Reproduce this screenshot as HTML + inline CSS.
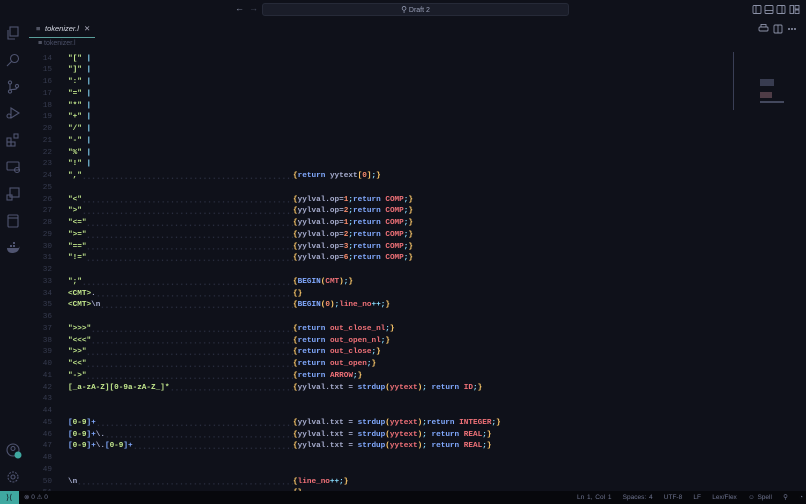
<!DOCTYPE html>
<html><head><meta charset="utf-8"><style>
*{margin:0;padding:0;box-sizing:border-box}
html,body{width:806px;height:504px;overflow:hidden}
body{background:#0f111a;position:relative;font-family:"Liberation Sans",sans-serif}
.title{position:absolute;left:0;top:0;width:806px;height:19px;background:#0f111a}
.search{position:absolute;left:262px;top:3px;width:307px;height:13px;background:#1a1d29;border:1px solid #262a38;border-radius:3px;color:#9aa0b8;font-size:7px;text-align:center;line-height:11px}
.act{position:absolute;left:0;top:19px;width:27px;height:472px;background:#0f111a}
.act svg{position:absolute;left:6px}
.tab{position:absolute;left:29px;top:20px;width:66px;height:18px;border-bottom:1.5px solid #5a9e9a;color:#d8dbe6;font-size:7.5px;font-style:italic;line-height:18px;padding-left:16px}
.bc{position:absolute;left:38px;top:40px;color:#4b5068;font-size:7px}
.code{position:absolute;left:0;top:53.5px;font-family:"Liberation Mono",monospace;font-size:7.7px;font-weight:bold}
.l{height:11.75px;line-height:11.75px;white-space:pre;display:flex;position:relative}
.n{width:52px;text-align:right;color:#363b4f;font-weight:normal}
.p{position:absolute;left:68px;display:flex;width:225px}
.f{flex:1;background-image:radial-gradient(circle,#33384d 0.5px,transparent 0.8px);background-size:4.65px 11.75px;background-position:0 1px}
.a{position:absolute;left:293px}
.s{color:#c3e88d}.c{color:#89ddff}.y{color:#ffcb6b}.k{color:#82aaff}.r{color:#f07178}.o{color:#f78c6c}.v{color:#a6accd}.b{color:#82aaff}
.status{position:absolute;left:0;top:491px;width:806px;height:13px;background:#07080c;color:#6f7590;font-size:6.5px;line-height:13px}
.rem{position:absolute;left:0;top:0;width:19px;height:13px;background:#3fa8a0}
</style></head><body>
<div class="title">
<span style="position:absolute;left:235px;top:3px;color:#8c92a8;font-size:9px">←</span>
<span style="position:absolute;left:249px;top:3px;color:#474c60;font-size:9px">→</span>
<div class="search"><span style="font-size:8px">⚲</span> Draft 2</div>
<svg style="position:absolute;left:752px;top:5px" width="48" height="9" fill="none" stroke="#8c92a8" stroke-width="0.9">
<rect x="1" y="0.5" width="8" height="8" rx="1"/><line x1="4" y1="0.5" x2="4" y2="8.5"/>
<rect x="13" y="0.5" width="8" height="8" rx="1"/><line x1="13" y1="5.5" x2="21" y2="5.5"/>
<rect x="25" y="0.5" width="8" height="8" rx="1"/><line x1="30" y1="0.5" x2="30" y2="8.5"/>
<rect x="38" y="0.5" width="3.5" height="8"/><rect x="43" y="0.5" width="4" height="3.5"/><rect x="43" y="5" width="4" height="3.5"/>
</svg>
</div>
<div class="act">
<svg style="top:7px" width="14" height="14" fill="none" stroke="#4f5470" stroke-width="1.1"><rect x="4" y="1" width="8" height="9"/><path d="M2 4v9h7"/></svg>
<svg style="top:34px" width="14" height="14" fill="none" stroke="#4f5470" stroke-width="1.1"><circle cx="8.5" cy="5.5" r="4"/><path d="M5.5 8.5L1 13"/></svg>
<svg style="top:61px" width="14" height="14" fill="none" stroke="#4f5470" stroke-width="1.1"><circle cx="4" cy="2.5" r="1.6"/><circle cx="4" cy="11.5" r="1.6"/><circle cx="11" cy="6" r="1.6"/><path d="M4 4v6M11 7.6c0 3-7 1-7 2.5"/></svg>
<svg style="top:87px" width="14" height="14" fill="none" stroke="#4f5470" stroke-width="1.1"><path d="M5 2l8 5-8 5z"/><circle cx="3" cy="10" r="2"/></svg>
<svg style="top:114px" width="14" height="14" fill="none" stroke="#4f5470" stroke-width="1.1"><rect x="1" y="5" width="4" height="4"/><rect x="1" y="9" width="4" height="4"/><rect x="5" y="9" width="4" height="4"/><rect x="8" y="1" width="4" height="4"/></svg>
<svg style="top:141px" width="14" height="14" fill="none" stroke="#4f5470" stroke-width="1.1"><rect x="1" y="2" width="12" height="8" rx="1"/><circle cx="11" cy="10" r="2.5"/></svg>
<svg style="top:168px" width="14" height="14" fill="none" stroke="#4f5470" stroke-width="1.1"><rect x="4" y="1" width="9" height="9"/><rect x="1" y="8" width="5" height="5"/></svg>
<svg style="top:195px" width="14" height="14" fill="none" stroke="#4f5470" stroke-width="1.1"><rect x="2" y="1" width="10" height="12" rx="1"/><path d="M2 4h10"/></svg>
<svg style="top:222px" width="14" height="14" fill="#4f5470"><path d="M1 7h11c1 0 1.5-1 2-2l-1 3c-1 3-4 4-7 4s-5-2-5-5z"/><rect x="4" y="4" width="2" height="2"/><rect x="7" y="4" width="2" height="2"/><rect x="7" y="1" width="2" height="2"/></svg>
<svg style="top:424px" width="16" height="16" fill="none" stroke="#4f5470" stroke-width="1.1"><circle cx="7" cy="7" r="6"/><circle cx="7" cy="5.5" r="2"/><circle cx="12" cy="12" r="3.5" fill="#3fa8a0" stroke="none"/></svg>
<svg style="top:451px" width="14" height="14" fill="none" stroke="#4f5470" stroke-width="1.1"><circle cx="7" cy="7" r="2"/><circle cx="7" cy="7" r="5" stroke-dasharray="2 1.2"/></svg>
</div>
<div class="tab"><span style="position:absolute;left:7px;font-style:normal;color:#8c92a8">≡</span>tokenizer.l<span style="position:absolute;left:55px;font-style:normal;color:#aab">✕</span></div>
<div class="bc"><span style="color:#8c92a8">≡</span> tokenizer.l</div>
<svg style="position:absolute;left:758px;top:24px" width="40" height="10" fill="none" stroke="#8c92a8" stroke-width="0.9"><rect x="1" y="3" width="9" height="4" rx="1"/><rect x="3" y="0.5" width="5" height="2.5"/><rect x="16" y="1" width="8" height="8" rx="1"/><line x1="20" y1="1" x2="20" y2="9"/><circle cx="31" cy="5" r="0.6" fill="#8c92a8"/><circle cx="34" cy="5" r="0.6" fill="#8c92a8"/><circle cx="37" cy="5" r="0.6" fill="#8c92a8"/></svg>
<div style="position:absolute;left:760px;top:79px;width:14px;height:7px;background:#4a4f68;opacity:.7"></div>
<div style="position:absolute;left:760px;top:92px;width:12px;height:6px;background:#6a4f5a;opacity:.7"></div>
<div style="position:absolute;left:760px;top:101px;width:24px;height:2px;background:#5a5f7a;opacity:.7"></div>
<div style="position:absolute;left:733px;top:52px;width:1px;height:58px;background:#3a3f56"></div>
<div class="code">
<div class="l"><span class="n">14</span><span class="p"><span class="s">"["</span><span class="c"> |</span></span></div>
<div class="l"><span class="n">15</span><span class="p"><span class="s">"]"</span><span class="c"> |</span></span></div>
<div class="l"><span class="n">16</span><span class="p"><span class="s">":"</span><span class="c"> |</span></span></div>
<div class="l"><span class="n">17</span><span class="p"><span class="s">"="</span><span class="c"> |</span></span></div>
<div class="l"><span class="n">18</span><span class="p"><span class="s">"*"</span><span class="c"> |</span></span></div>
<div class="l"><span class="n">19</span><span class="p"><span class="s">"+"</span><span class="c"> |</span></span></div>
<div class="l"><span class="n">20</span><span class="p"><span class="s">"/"</span><span class="c"> |</span></span></div>
<div class="l"><span class="n">21</span><span class="p"><span class="s">"-"</span><span class="c"> |</span></span></div>
<div class="l"><span class="n">22</span><span class="p"><span class="s">"%"</span><span class="c"> |</span></span></div>
<div class="l"><span class="n">23</span><span class="p"><span class="s">"!"</span><span class="c"> |</span></span></div>
<div class="l"><span class="n">24</span><span class="p"><span class="s">","</span><span class="f"></span></span><span class="a"><span class="y">{</span><span class="k">return</span> <span class="v">yytext</span><span class="y">[</span><span class="o">0</span><span class="y">]</span><span class="c">;</span><span class="y">}</span></span></div>
<div class="l"><span class="n">25</span></div>
<div class="l"><span class="n">26</span><span class="p"><span class="s">"&lt;"</span><span class="f"></span></span><span class="a"><span class="y">{</span><span class="v">yylval.op=</span><span class="o">1</span><span class="c">;</span><span class="k">return</span> <span class="r">COMP</span><span class="c">;</span><span class="y">}</span></span></div>
<div class="l"><span class="n">27</span><span class="p"><span class="s">"&gt;"</span><span class="f"></span></span><span class="a"><span class="y">{</span><span class="v">yylval.op=</span><span class="o">2</span><span class="c">;</span><span class="k">return</span> <span class="r">COMP</span><span class="c">;</span><span class="y">}</span></span></div>
<div class="l"><span class="n">28</span><span class="p"><span class="s">"&lt;="</span><span class="f"></span></span><span class="a"><span class="y">{</span><span class="v">yylval.op=</span><span class="o">1</span><span class="c">;</span><span class="k">return</span> <span class="r">COMP</span><span class="c">;</span><span class="y">}</span></span></div>
<div class="l"><span class="n">29</span><span class="p"><span class="s">"&gt;="</span><span class="f"></span></span><span class="a"><span class="y">{</span><span class="v">yylval.op=</span><span class="o">2</span><span class="c">;</span><span class="k">return</span> <span class="r">COMP</span><span class="c">;</span><span class="y">}</span></span></div>
<div class="l"><span class="n">30</span><span class="p"><span class="s">"=="</span><span class="f"></span></span><span class="a"><span class="y">{</span><span class="v">yylval.op=</span><span class="o">3</span><span class="c">;</span><span class="k">return</span> <span class="r">COMP</span><span class="c">;</span><span class="y">}</span></span></div>
<div class="l"><span class="n">31</span><span class="p"><span class="s">"!="</span><span class="f"></span></span><span class="a"><span class="y">{</span><span class="v">yylval.op=</span><span class="o">6</span><span class="c">;</span><span class="k">return</span> <span class="r">COMP</span><span class="c">;</span><span class="y">}</span></span></div>
<div class="l"><span class="n">32</span></div>
<div class="l"><span class="n">33</span><span class="p"><span class="s">";"</span><span class="f"></span></span><span class="a"><span class="y">{</span><span class="b">BEGIN</span><span class="y">(</span><span class="r">CMT</span><span class="y">)</span><span class="c">;</span><span class="y">}</span></span></div>
<div class="l"><span class="n">34</span><span class="p"><span class="s">&lt;CMT&gt;</span><span class="v">.</span><span class="f"></span></span><span class="a"><span class="y">{}</span></span></div>
<div class="l"><span class="n">35</span><span class="p"><span class="s">&lt;CMT&gt;</span><span class="v">\n</span><span class="f"></span></span><span class="a"><span class="y">{</span><span class="b">BEGIN</span><span class="y">(</span><span class="o">0</span><span class="y">)</span><span class="c">;</span><span class="r">line_no</span><span class="c">++;</span><span class="y">}</span></span></div>
<div class="l"><span class="n">36</span></div>
<div class="l"><span class="n">37</span><span class="p"><span class="s">"&gt;&gt;&gt;"</span><span class="f"></span></span><span class="a"><span class="y">{</span><span class="k">return</span> <span class="r">out_close_nl</span><span class="c">;</span><span class="y">}</span></span></div>
<div class="l"><span class="n">38</span><span class="p"><span class="s">"&lt;&lt;&lt;"</span><span class="f"></span></span><span class="a"><span class="y">{</span><span class="k">return</span> <span class="r">out_open_nl</span><span class="c">;</span><span class="y">}</span></span></div>
<div class="l"><span class="n">39</span><span class="p"><span class="s">"&gt;&gt;"</span><span class="f"></span></span><span class="a"><span class="y">{</span><span class="k">return</span> <span class="r">out_close</span><span class="c">;</span><span class="y">}</span></span></div>
<div class="l"><span class="n">40</span><span class="p"><span class="s">"&lt;&lt;"</span><span class="f"></span></span><span class="a"><span class="y">{</span><span class="k">return</span> <span class="r">out_open</span><span class="c">;</span><span class="y">}</span></span></div>
<div class="l"><span class="n">41</span><span class="p"><span class="s">"-&gt;"</span><span class="f"></span></span><span class="a"><span class="y">{</span><span class="k">return</span> <span class="r">ARROW</span><span class="c">;</span><span class="y">}</span></span></div>
<div class="l"><span class="n">42</span><span class="p"><span class="s">[_a-zA-Z][0-9a-zA-Z_]*</span><span class="f"></span></span><span class="a"><span class="y">{</span><span class="v">yylval.txt = </span><span class="b">strdup</span><span class="y">(</span><span class="r">yytext</span><span class="y">)</span><span class="c">;</span> <span class="k">return</span> <span class="r">ID</span><span class="c">;</span><span class="y">}</span></span></div>
<div class="l"><span class="n">43</span></div>
<div class="l"><span class="n">44</span></div>
<div class="l"><span class="n">45</span><span class="p"><span class="b">[</span><span class="s">0-9</span><span class="b">]+</span><span class="f"></span></span><span class="a"><span class="y">{</span><span class="v">yylval.txt = </span><span class="b">strdup</span><span class="y">(</span><span class="r">yytext</span><span class="y">)</span><span class="c">;</span><span class="k">return</span> <span class="r">INTEGER</span><span class="c">;</span><span class="y">}</span></span></div>
<div class="l"><span class="n">46</span><span class="p"><span class="b">[</span><span class="s">0-9</span><span class="b">]+</span><span class="v">\.</span><span class="f"></span></span><span class="a"><span class="y">{</span><span class="v">yylval.txt = </span><span class="b">strdup</span><span class="y">(</span><span class="r">yytext</span><span class="y">)</span><span class="c">;</span> <span class="k">return</span> <span class="r">REAL</span><span class="c">;</span><span class="y">}</span></span></div>
<div class="l"><span class="n">47</span><span class="p"><span class="b">[</span><span class="s">0-9</span><span class="b">]+</span><span class="v">\.</span><span class="b">[</span><span class="s">0-9</span><span class="b">]+</span><span class="f"></span></span><span class="a"><span class="y">{</span><span class="v">yylval.txt = </span><span class="b">strdup</span><span class="y">(</span><span class="r">yytext</span><span class="y">)</span><span class="c">;</span> <span class="k">return</span> <span class="r">REAL</span><span class="c">;</span><span class="y">}</span></span></div>
<div class="l"><span class="n">48</span></div>
<div class="l"><span class="n">49</span></div>
<div class="l"><span class="n">50</span><span class="p"><span class="v">\n</span><span class="f"></span></span><span class="a"><span class="y">{</span><span class="r">line_no</span><span class="c">++;</span><span class="y">}</span></span></div>
<div class="l"><span class="n">51</span><span class="p"><span class="f"></span></span><span class="a"><span class="y">{}</span></span></div>
</div>
<div class="status"><div class="rem"></div>
<span style="position:absolute;left:6px;color:#0f111a;font-size:8px">⟩⟨</span>
<span style="position:absolute;left:24px">⊗ 0 ⚠ 0</span>
<span style="position:absolute;left:577px;word-spacing:1px">Ln 1, Col 1 &nbsp;&nbsp; Spaces: 4 &nbsp;&nbsp; UTF-8 &nbsp;&nbsp; LF &nbsp;&nbsp; Lex/Flex &nbsp;&nbsp; ☺ Spell &nbsp;&nbsp; ⚲ &nbsp;&nbsp; ◔</span>
</div>
</body></html>
